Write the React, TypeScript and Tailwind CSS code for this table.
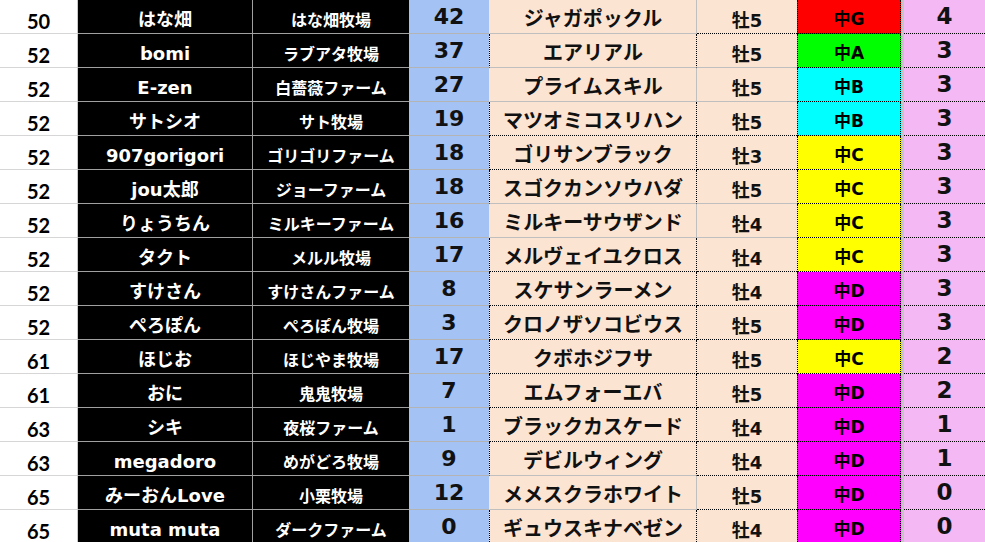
import React from "react";

type Grade = "G" | "A" | "B" | "C" | "D";
type R = {
  rank: number;
  name: string;
  farm: string;
  num: number;
  horse: string;
  sex: string;
  grade: Grade;
  pts: number;
};

const rows: R[] = [
  { rank: 50, name: "はな畑", farm: "はな畑牧場", num: 42, horse: "ジャガポックル", sex: "牡5", grade: "G", pts: 4 },
  { rank: 52, name: "bomi", farm: "ラブアタ牧場", num: 37, horse: "エアリアル", sex: "牡5", grade: "A", pts: 3 },
  { rank: 52, name: "E-zen", farm: "白薔薇ファーム", num: 27, horse: "プライムスキル", sex: "牡5", grade: "B", pts: 3 },
  { rank: 52, name: "サトシオ", farm: "サト牧場", num: 19, horse: "マツオミコスリハン", sex: "牡5", grade: "B", pts: 3 },
  { rank: 52, name: "907gorigori", farm: "ゴリゴリファーム", num: 18, horse: "ゴリサンブラック", sex: "牡3", grade: "C", pts: 3 },
  { rank: 52, name: "jou太郎", farm: "ジョーファーム", num: 18, horse: "スゴクカンソウハダ", sex: "牡5", grade: "C", pts: 3 },
  { rank: 52, name: "りょうちん", farm: "ミルキーファーム", num: 16, horse: "ミルキーサウザンド", sex: "牡4", grade: "C", pts: 3 },
  { rank: 52, name: "タクト", farm: "メルル牧場", num: 17, horse: "メルヴェイユクロス", sex: "牡4", grade: "C", pts: 3 },
  { rank: 52, name: "すけさん", farm: "すけさんファーム", num: 8, horse: "スケサンラーメン", sex: "牡4", grade: "D", pts: 3 },
  { rank: 52, name: "ぺろぽん", farm: "ぺろぽん牧場", num: 3, horse: "クロノザソコビウス", sex: "牡5", grade: "D", pts: 3 },
  { rank: 61, name: "ほじお", farm: "ほじやま牧場", num: 17, horse: "クボホジフサ", sex: "牡5", grade: "C", pts: 2 },
  { rank: 61, name: "おに", farm: "鬼鬼牧場", num: 7, horse: "エムフォーエバ", sex: "牡5", grade: "D", pts: 2 },
  { rank: 63, name: "シキ", farm: "夜桜ファーム", num: 1, horse: "ブラックカスケード", sex: "牡4", grade: "D", pts: 1 },
  { rank: 63, name: "megadoro", farm: "めがどろ牧場", num: 9, horse: "デビルウィング", sex: "牡4", grade: "D", pts: 1 },
  { rank: 65, name: "みーおんLove", farm: "小栗牧場", num: 12, horse: "メメスクラホワイト", sex: "牡5", grade: "D", pts: 0 },
  { rank: 65, name: "muta muta", farm: "ダークファーム", num: 0, horse: "ギュウスキナベゼン", sex: "牡4", grade: "D", pts: 0 },
];

const gradeBg: Record<Grade, string> = {
  G: "bg-[#ff0000]",
  A: "bg-[#00ff00]",
  B: "bg-[#00ffff]",
  C: "bg-[#ffff00]",
  D: "bg-[#ff00ff]",
};

const horseBottomDotted = [3, 4, 7, 8, 9, 10, 11, 12];
const horsePlainSides = [0, 2, 6, 14];
const sexBottomSolid = [1, 2, 5, 6];

const cell = "shrink-0 flex justify-center items-center leading-none whitespace-nowrap";
const jp = "font-['DejaVu_Sans','Noto_Sans_CJK_JP',sans-serif]";

function Row({ r, i }: { r: R; i: number }) {
  const plain = horsePlainSides.includes(i);
  const horseLeft = plain ? "[border-left:1px_solid_transparent]" : "[border-left:1px_dotted_#000]";
  const horseRight = plain ? "[border-right:1px_solid_#bfbfbf]" : "[border-right:1px_dotted_#000]";
  const horseBottom = horseBottomDotted.includes(i)
    ? "[border-bottom:1px_dotted_#000]"
    : "[border-bottom:1px_solid_#bfbfbf]";
  const sexBottom = sexBottomSolid.includes(i)
    ? "[border-bottom:1px_solid_#bfbfbf]"
    : "[border-bottom:1px_dotted_#000]";
  return (
    <div className="flex h-[34px]">
      <div
        className={`${cell} w-[78px] pt-[8px] bg-white text-black font-['Lato',sans-serif] text-[20px] [border-right:1px_solid_#c8c8c8] [border-bottom:1px_solid_#d6d6d6]`}
      >
        {r.rank}
      </div>
      <div
        className={`${cell} ${jp} w-[175px] pt-[7px] bg-black text-white text-[18px] [border-right:1px_solid_#a0a0a0] [border-bottom:1px_solid_#a0a0a0]`}
      >
        {r.name}
      </div>
      <div
        className={`${cell} ${jp} w-[156px] pt-[9px] bg-black text-white text-[16px] [border-bottom:1px_solid_#a0a0a0]`}
      >
        {r.farm}
      </div>
      <div
        className={`${cell} ${jp} w-[80px] pt-[1px] bg-[#a4c2f4] text-[#111] text-[22px] [border-bottom:1px_solid_#b4b4b4]`}
      >
        {r.num}
      </div>
      <div
        className={`${cell} ${jp} w-[208px] pt-[4px] bg-[#fce4d2] text-[#111] text-[20px] ${horseLeft} ${horseRight} ${horseBottom}`}
      >
        {r.horse}
      </div>
      <div className={`${cell} ${jp} w-[100px] pt-[9px] bg-[#fce4d2] text-[#111] text-[18px] ${sexBottom}`}>
        {r.sex}
      </div>
      <div
        className={`${cell} ${jp} w-[104px] pt-[6px] ${gradeBg[r.grade]} text-black text-[17px] [border-left:1px_dotted_#000] [border-right:1px_dotted_#000] [border-bottom:1px_dotted_#000]`}
      >
        {"中" + r.grade}
      </div>
      <div className="shrink-0 w-[3px] bg-[#c6c6c6]" />
      <div
        className={`${cell} ${jp} w-[81px] bg-[#f4b8f4] text-[#111] text-[23px] [border-bottom:1px_dotted_#000]`}
      >
        {r.pts}
      </div>
    </div>
  );
}

export default function App() {
  return (
    <div className="w-[985px] h-[542px] overflow-hidden bg-white font-bold">
      {rows.map((r, i) => (
        <Row key={i} r={r} i={i} />
      ))}
    </div>
  );
}
